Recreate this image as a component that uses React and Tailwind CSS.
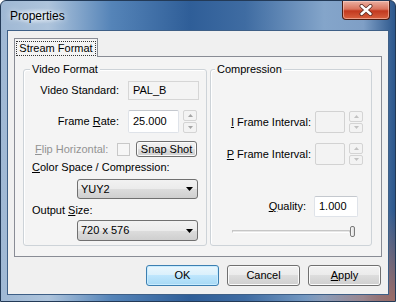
import React from "react";

function SpinBox({ dim }) {
  const arrow = dim ? "#c2c2c2" : "#a4a4a4";
  return (
    <div className="ml-[4px] flex h-full w-[14px] flex-col gap-[1px]">
      <div className="flex flex-1 items-center justify-center rounded-[2px] border border-[#d4d4d4] bg-[#f3f3f3]">
        <svg width="5" height="3" viewBox="0 0 5 3">
          <path d="M0 3 L2.5 0 L5 3 Z" fill={arrow} />
        </svg>
      </div>
      <div className="flex flex-1 items-center justify-center rounded-[2px] border border-[#d4d4d4] bg-[#f3f3f3]">
        <svg width="5" height="3" viewBox="0 0 5 3">
          <path d="M0 0 L5 0 L2.5 3 Z" fill={arrow} />
        </svg>
      </div>
    </div>
  );
}

function Combo({ value }) {
  return (
    <div className="ml-[53px] flex h-full w-[121px] items-center justify-between rounded-[3px] border border-[#707070] bg-[linear-gradient(#f2f2f2_0%,#ebebeb_50%,#dddddd_50%,#cfcfcf_100%)] pl-[3px] pr-[4px]">
      <span>{value}</span>
      <svg width="7" height="4" viewBox="0 0 7 4">
        <path d="M0 0 L7 0 L3.5 4 Z" fill="#000" />
      </svg>
    </div>
  );
}

function Button({ children, primary, className = "" }) {
  const look = primary
    ? "border-[#3c7fb1] bg-[linear-gradient(#eaf6fd_0%,#d9f0fc_50%,#bee6fd_50%,#a7d9f5_100%)] shadow-[inset_0_0_0_1px_#c8ecff]"
    : "border-[#707070] bg-[linear-gradient(#f2f2f2_0%,#ebebeb_50%,#dddddd_50%,#cfcfcf_100%)] shadow-[inset_0_0_0_1px_#fbfbfb]";
  return (
    <div className={`flex items-center justify-center rounded-[3px] border ${look} ${className}`}>
      {children}
    </div>
  );
}

export default function App() {
  return (
    <div className="flex h-[302px] w-[396px] flex-col overflow-hidden rounded-t-[6px] border border-[#233a57] bg-[radial-gradient(circle_at_100%_100%,rgba(176,112,96,0.85),transparent_90px),linear-gradient(90deg,#9fb8d4_0%,#aec4dc_12%,#5584b8_28%,#2f5e98_48%,#3f6ca2_62%,#84a5ca_82%,#7f9fc6_92%,#2c578c_100%)] font-['Liberation_Sans',Arial,sans-serif] text-[11px] text-black">
      {/* title bar */}
      <div className="flex h-[29px] shrink-0 items-start justify-between pl-[7px] pr-[5px]">
        <span className="mt-[7px] rounded-[10px] bg-[radial-gradient(closest-side,rgba(235,242,250,0.85),rgba(235,242,250,0))] px-[2px] text-[12px] leading-[16px] [text-shadow:0_0_6px_#ffffff]">
          Properties
        </span>
        <div className="flex h-[19px] w-[48px] items-center justify-center rounded-b-[4px] border border-t-0 border-[#4a1c12] bg-[linear-gradient(#eab0a2_0%,#d9745e_45%,#c2391f_55%,#d8613f_100%)] shadow-[inset_0_0_0_1px_rgba(255,220,210,0.5)]">
          <svg width="14" height="12" viewBox="0 0 14 12">
            <path d="M2.5 2 L11.5 10 M11.5 2 L2.5 10" stroke="#5a2a22" strokeWidth="4" strokeLinecap="round" />
            <path d="M2.5 2 L11.5 10 M11.5 2 L2.5 10" stroke="#ffffff" strokeWidth="2.4" strokeLinecap="round" />
          </svg>
        </div>
      </div>

      {/* client area */}
      <div className="ml-[6px] flex h-[265px] w-[382px] flex-col border border-[#3e5f86] bg-[#f0f0f0] pl-[6px] pt-[7px]">
        {/* tab header */}
        <div className="relative z-10 -mb-[1px] flex h-[19px] w-[84px] items-center justify-center border border-b-0 border-[#898c95] bg-[#f4f4f4]">
          <span className="border border-dotted border-[#333] px-[2px] leading-[13px]">Stream Format</span>
        </div>

        {/* tab panel */}
        <div className="flex h-[201px] w-[368px] gap-[3px] border border-[#898c95] bg-[#f4f4f4] pl-[8px] pt-[12px]">
          {/* Video Format */}
          <div className="relative h-[177px] w-[184px] rounded-[3px] border border-[#cdd3d8] pt-[11px] shadow-[inset_1px_1px_0_#ffffff]">
            <span className="absolute -top-[8px] left-[6px] bg-[#f4f4f4] px-[2px] leading-[14px]">Video Format</span>

            <div className="flex h-[19px] items-center">
              <span className="w-[95px] text-right">Video Standard:</span>
              <div className="ml-[9px] flex h-full w-[71px] items-center border border-[#d6d6d6] pl-[4px]">PAL_B</div>
            </div>

            <div className="mt-[10px] flex h-[23px] items-center">
              <span className="w-[95px] text-right">
                Frame <u>R</u>ate:
              </span>
              <div className="ml-[9px] flex h-full w-[51px] items-center rounded-[2px] border border-[#dfe3e9] border-t-[#c4c8ce] bg-white pl-[4px]">
                25.000
              </div>
              <SpinBox />
            </div>

            <div className="mt-[8px] flex h-[16px] items-center">
              <span className="w-[93px] pl-[11px] text-[#939393]">
                <u>F</u>lip Horizontal:
              </span>
              <div className="h-[13px] w-[13px] border border-[#c8c8c8] bg-[#f6f6f6]" />
              <Button className="ml-[6px] h-full w-[61px]">Snap Shot</Button>
            </div>

            <div className="mt-[3px] flex h-[14px] items-center pl-[8px]">
              <span>
                <u>C</u>olor Space / Compression:
              </span>
            </div>

            <div className="mt-[5px] flex h-[20px]">
              <Combo value="YUY2" />
            </div>

            <div className="mt-[4px] flex h-[14px] items-center pl-[8px]">
              <span>
                Output <u>S</u>ize:
              </span>
            </div>

            <div className="mt-[3px] flex h-[21px]">
              <Combo value="720 x 576" />
            </div>
          </div>

          {/* Compression */}
          <div className="relative h-[177px] w-[162px] rounded-[3px] border border-[#cdd3d8] pt-[41px] shadow-[inset_1px_1px_0_#ffffff]">
            <span className="absolute -top-[8px] left-[4px] bg-[#f4f4f4] px-[2px] leading-[14px]">Compression</span>

            <div className="flex h-[22px] items-center justify-end pr-[8px]">
              <span>
                <u>I</u> Frame Interval:
              </span>
              <div className="ml-[4px] h-full w-[30px] rounded-[2px] border border-[#d2d2d2] bg-[#f3f3f3]" />
              <SpinBox dim />
            </div>

            <div className="mt-[10px] flex h-[22px] items-center justify-end pr-[8px]">
              <span>
                <u>P</u> Frame Interval:
              </span>
              <div className="ml-[4px] h-full w-[30px] rounded-[2px] border border-[#d2d2d2] bg-[#f3f3f3]" />
              <SpinBox dim />
            </div>

            <div className="mt-[31px] flex h-[21px] items-center justify-end pr-[13px]">
              <span>
                <u>Q</u>uality:
              </span>
              <div className="ml-[8px] flex h-full w-[44px] items-center rounded-[2px] border border-[#dfe3e9] border-t-[#c4c8ce] bg-white pl-[4px]">
                1.000
              </div>
            </div>

            <div className="mt-[9px] flex h-[11px] items-center pl-[21px]">
              <div className="h-[3px] w-[118px] border border-[#c6c6c6] border-b-[#ffffff] bg-[#e6e6e6]" />
              <div className="h-[11px] w-[5px] rounded-[2px] border border-[#7a7a7a] bg-[linear-gradient(90deg,#fafafa,#dcdcdc)]" />
            </div>
          </div>
        </div>

        {/* dialog buttons */}
        <div className="mt-[8px] flex justify-end gap-[8px] pr-[7px]">
          <Button primary className="h-[21px] w-[73px]">OK</Button>
          <Button className="h-[21px] w-[73px]">Cancel</Button>
          <Button className="h-[21px] w-[73px]">
            <span>
              <u>A</u>pply
            </span>
          </Button>
        </div>
      </div>
    </div>
  );
}
